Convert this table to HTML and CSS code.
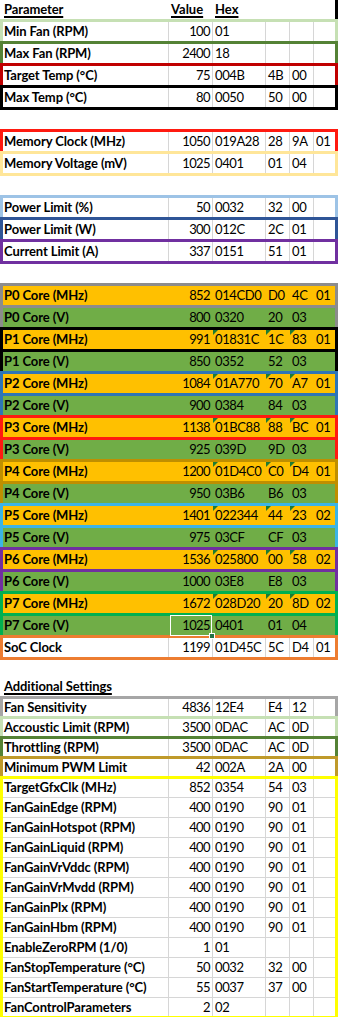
FILE: index.html
```html
<!DOCTYPE html>
<html>
<head>
<meta charset="utf-8">
<link rel="stylesheet" href="styles.css">
</head>
<body>
<div class="sheet">
  <div class="row hdr"><span class="n"><u>Parameter</u></span><span class="hv"><u>Value</u></span><span class="hh"><u>Hex</u></span></div>
  <div class="row w bx c-lg"><span class="n">Min Fan (RPM)</span><span class="v">100</span><span class="h">01</span><span class="b"></span><span class="b"></span><span class="b"></span></div>
  <div class="row w bx c-dg"><span class="n">Max Fan (RPM)</span><span class="v">2400</span><span class="h">18</span><span class="b"></span><span class="b"></span><span class="b"></span></div>
  <div class="row w bx c-dr"><span class="n">Target Temp (°C)</span><span class="v">75</span><span class="h">004B</span><span class="b">4B</span><span class="b">00</span><span class="b"></span></div>
  <div class="row w bx c-bk"><span class="n">Max Temp (°C)</span><span class="v">80</span><span class="h">0050</span><span class="b">50</span><span class="b">00</span><span class="b"></span></div>
  <div class="gap"></div>
  <div class="row w bx c-rd"><span class="n">Memory Clock (MHz)</span><span class="v">1050</span><span class="h">019A28</span><span class="b">28</span><span class="b">9A</span><span class="b">01</span></div>
  <div class="row w bx c-ly"><span class="n">Memory Voltage (mV)</span><span class="v">1025</span><span class="h">0401</span><span class="b">01</span><span class="b">04</span><span class="b"></span></div>
  <div class="gap"></div>
  <div class="row w bx c-lb"><span class="n">Power Limit (%)</span><span class="v">50</span><span class="h">0032</span><span class="b">32</span><span class="b">00</span><span class="b"></span></div>
  <div class="row w bx c-db"><span class="n">Power Limit (W)</span><span class="v">300</span><span class="h">012C</span><span class="b">2C</span><span class="b">01</span><span class="b"></span></div>
  <div class="row w bx c-pu"><span class="n">Current Limit (A)</span><span class="v">337</span><span class="h">0151</span><span class="b">51</span><span class="b">01</span><span class="b"></span></div>
  <div class="gap"></div>
  <div class="row or bx c-gy"><span class="n">P0 Core (MHz)</span><span class="v">852</span><span class="h">014CD0</span><span class="b">D0</span><span class="b">4C</span><span class="b">01</span></div>
  <div class="row gr bx c-gy"><span class="n">P0 Core (V)</span><span class="v">800</span><span class="h">0320</span><span class="b">20</span><span class="b">03</span><span class="b"></span></div>
  <div class="row or bx c-bk"><span class="n">P1 Core (MHz)</span><span class="v">991</span><span class="h t">01831C</span><span class="b t">1C</span><span class="b t">83</span><span class="b">01</span></div>
  <div class="row gr bx c-bk"><span class="n">P1 Core (V)</span><span class="v">850</span><span class="h">0352</span><span class="b">52</span><span class="b">03</span><span class="b"></span></div>
  <div class="row or bx c-bl"><span class="n">P2 Core (MHz)</span><span class="v">1084</span><span class="h t">01A770</span><span class="b t">70</span><span class="b t">A7</span><span class="b">01</span></div>
  <div class="row gr bx c-bl"><span class="n">P2 Core (V)</span><span class="v">900</span><span class="h">0384</span><span class="b">84</span><span class="b">03</span><span class="b"></span></div>
  <div class="row or bx c-rd"><span class="n">P3 Core (MHz)</span><span class="v">1138</span><span class="h t">01BC88</span><span class="b t">88</span><span class="b t">BC</span><span class="b">01</span></div>
  <div class="row gr bx c-rd"><span class="n">P3 Core (V)</span><span class="v">925</span><span class="h">039D</span><span class="b">9D</span><span class="b">03</span><span class="b"></span></div>
  <div class="row or bx c-gd"><span class="n">P4 Core (MHz)</span><span class="v">1200</span><span class="h t">01D4C0</span><span class="b t">C0</span><span class="b t">D4</span><span class="b">01</span></div>
  <div class="row gr bx c-gd"><span class="n">P4 Core (V)</span><span class="v">950</span><span class="h">03B6</span><span class="b">B6</span><span class="b">03</span><span class="b"></span></div>
  <div class="row or bx c-cy"><span class="n">P5 Core (MHz)</span><span class="v">1401</span><span class="h t">022344</span><span class="b t">44</span><span class="b t">23</span><span class="b">02</span></div>
  <div class="row gr bx c-cy"><span class="n">P5 Core (V)</span><span class="v">975</span><span class="h">03CF</span><span class="b">CF</span><span class="b">03</span><span class="b"></span></div>
  <div class="row or bx c-pu"><span class="n">P6 Core (MHz)</span><span class="v">1536</span><span class="h t">025800</span><span class="b t">00</span><span class="b t">58</span><span class="b">02</span></div>
  <div class="row gr bx c-pu"><span class="n">P6 Core (V)</span><span class="v">1000</span><span class="h">03E8</span><span class="b">E8</span><span class="b">03</span><span class="b"></span></div>
  <div class="row or bx c-gn"><span class="n">P7 Core (MHz)</span><span class="v">1672</span><span class="h t">028D20</span><span class="b t">20</span><span class="b t">8D</span><span class="b">02</span></div>
  <div class="row gr bx c-gn"><span class="n">P7 Core (V)</span><span class="v sel">1025</span><span class="h">0401</span><span class="b">01</span><span class="b">04</span><span class="b"></span></div>
  <div class="row w bx c-og"><span class="n">SoC Clock</span><span class="v">1199</span><span class="h">01D45C</span><span class="b">5C</span><span class="b">D4</span><span class="b">01</span></div>
  <div class="gap lo"></div>
  <div class="row lo sec"><span class="n"><u>Additional Settings</u></span></div>
  <div class="row lo w bx c-g2"><span class="n">Fan Sensitivity</span><span class="v">4836</span><span class="h">12E4</span><span class="b">E4</span><span class="b">12</span><span class="b"></span></div>
  <div class="row lo w bx c-lg"><span class="n">Accoustic Limit (RPM)</span><span class="v">3500</span><span class="h">0DAC</span><span class="b">AC</span><span class="b">0D</span><span class="b"></span></div>
  <div class="row lo w bx c-dg"><span class="n">Throttling (RPM)</span><span class="v">3500</span><span class="h">0DAC</span><span class="b">AC</span><span class="b">0D</span><span class="b"></span></div>
  <div class="row lo w bx c-gd2"><span class="n">Minimum PWM Limit</span><span class="v">42</span><span class="h">002A</span><span class="b">2A</span><span class="b">00</span><span class="b"></span></div>
  <div class="blk bx c-yl">
    <div class="row lo w"><span class="n">TargetGfxClk (MHz)</span><span class="v">852</span><span class="h">0354</span><span class="b">54</span><span class="b">03</span><span class="b"></span></div>
    <div class="row lo w"><span class="n">FanGainEdge (RPM)</span><span class="v">400</span><span class="h">0190</span><span class="b">90</span><span class="b">01</span><span class="b"></span></div>
    <div class="row lo w"><span class="n">FanGainHotspot (RPM)</span><span class="v">400</span><span class="h">0190</span><span class="b">90</span><span class="b">01</span><span class="b"></span></div>
    <div class="row lo w"><span class="n">FanGainLiquid (RPM)</span><span class="v">400</span><span class="h">0190</span><span class="b">90</span><span class="b">01</span><span class="b"></span></div>
    <div class="row lo w"><span class="n">FanGainVrVddc (RPM)</span><span class="v">400</span><span class="h">0190</span><span class="b">90</span><span class="b">01</span><span class="b"></span></div>
    <div class="row lo w"><span class="n">FanGainVrMvdd (RPM)</span><span class="v">400</span><span class="h">0190</span><span class="b">90</span><span class="b">01</span><span class="b"></span></div>
    <div class="row lo w"><span class="n">FanGainPlx (RPM)</span><span class="v">400</span><span class="h">0190</span><span class="b">90</span><span class="b">01</span><span class="b"></span></div>
    <div class="row lo w"><span class="n">FanGainHbm (RPM)</span><span class="v">400</span><span class="h">0190</span><span class="b">90</span><span class="b">01</span><span class="b"></span></div>
    <div class="row lo w"><span class="n">EnableZeroRPM (1/0)</span><span class="v">1</span><span class="h">01</span><span class="b"></span><span class="b"></span><span class="b"></span></div>
    <div class="row lo w"><span class="n">FanStopTemperature (°C)</span><span class="v">50</span><span class="h">0032</span><span class="b">32</span><span class="b">00</span><span class="b"></span></div>
    <div class="row lo w"><span class="n">FanStartTemperature (°C)</span><span class="v">55</span><span class="h">0037</span><span class="b">37</span><span class="b">00</span><span class="b"></span></div>
    <div class="row lo w"><span class="n">FanControlParameters</span><span class="v">2</span><span class="h">02</span><span class="b"></span><span class="b"></span><span class="b"></span></div>
  </div>
</div>
</body>
</html>
```
FILE: styles.css
```css
html, body {
  margin: 0;
  padding: 0;
  background: #ffffff;
}
.sheet {
  width: 338px;
  font-family: Lato, "Liberation Sans", sans-serif;
  font-size: 13px;
  color: #000000;
}
.row {
  display: grid;
  grid-template-columns: 168px 44px 53px 24px 24px 25px;
  height: 22px;
  line-height: 21px;
  box-sizing: border-box;
}
.row > span {
  display: block;
  box-sizing: border-box;
  padding-top: 1px;
  white-space: nowrap;
  overflow: visible;
  border-left: 1px solid transparent;
}
.row > span:first-child {
  border-left: none;
}
.row.lo {
  height: 20px;
  line-height: 19px;
}
.gap {
  height: 22px;
}
.gap.lo {
  height: 19px;
}
.n {
  font-weight: 700;
  padding-left: 4px;
  letter-spacing: -0.1px;
}
.v {
  text-align: right;
  padding-right: 2px;
  letter-spacing: -0.6px;
}
.h, .b {
  padding-left: 2px;
  letter-spacing: -0.4px;
}
.hdr {
  height: 20px;
  line-height: 19px;
  border-right: 3px solid #000000;
}
.hdr > span {
  padding-top: 0;
  font-weight: 700;
}
.hv, .hh {
  padding-left: 2px;
}
u {
  text-decoration-thickness: 1.5px;
  text-underline-offset: 2px;
}
.sec > span {
  padding-top: 0;
}
.w > span + span {
  border-left-color: #d6d6d6;
}
.or {
  background: #ffc000;
}
.gr {
  background: #70ad47;
}
.bx, .blk {
  position: relative;
}
.bx::after {
  content: "";
  position: absolute;
  left: 0;
  right: 0;
  top: -1px;
  bottom: -2px;
  border: 3px solid var(--bc);
  pointer-events: none;
}
.blk .row + .row {
  box-shadow: inset 0 1px 0 #d6d6d6;
}
.c-lg { --bc: #c6e0b4; }
.c-dg { --bc: #548235; }
.c-dr { --bc: #c00000; }
.c-bk { --bc: #000000; }
.c-rd { --bc: #ff1a10; }
.c-ly { --bc: #ffe699; }
.c-lb { --bc: #9dc3e6; }
.c-db { --bc: #2f5597; }
.c-pu { --bc: #7030a0; }
.c-gy { --bc: #8c8c8c; }
.c-bl { --bc: #2e75b6; }
.c-gd { --bc: #bf8f00; }
.c-cy { --bc: #3cb4e6; }
.c-gn { --bc: #00b050; }
.c-og { --bc: #ed7d31; }
.c-g2 { --bc: #a6a6a6; }
.c-gd2 { --bc: #bf9a2a; }
.c-yl { --bc: #ffff00; }
.t {
  position: relative;
}
.t::before {
  content: "";
  position: absolute;
  left: 0;
  top: 2px;
  width: 0;
  height: 0;
  border-style: solid;
  border-width: 5px 5px 0 0;
  border-color: #1e7b34 transparent transparent transparent;
}
.sel {
  position: relative;
}
.sel::before {
  content: "";
  position: absolute;
  left: 1px;
  top: 1px;
  right: 0;
  bottom: 0;
  border: 1px solid #ffffff;
  z-index: 4;
}
.sel::after {
  content: "";
  position: absolute;
  right: -3px;
  bottom: -3px;
  width: 4px;
  height: 4px;
  background: #217346;
  border: 1px solid #ffffff;
  z-index: 5;
}
```
